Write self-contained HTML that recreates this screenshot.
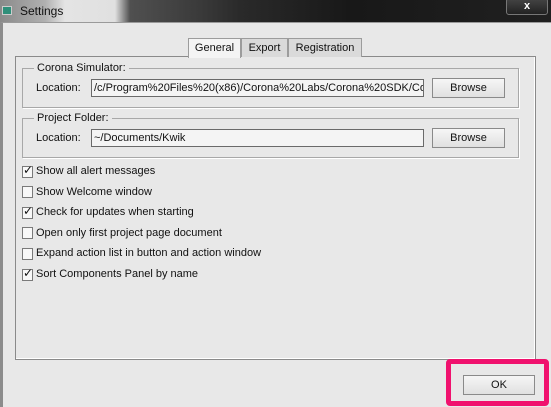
<!DOCTYPE html>
<html><head><style>
*{margin:0;padding:0;box-sizing:border-box}
body{width:551px;height:407px;overflow:hidden;background:#e6e6e6;font-family:"Liberation Sans",sans-serif;font-size:11px;color:#111;position:relative}
.a{position:absolute}
.title{left:0;top:0;width:551px;height:22px;background:linear-gradient(90deg,#8a8a8a 0,#b0b0b0 45px,#e4e4e4 65px,#e0e0e0 115px,#505050 130px,#3a3a3a 200px,#2a2a2a 240px,#181818 350px,#202020 551px)}
.frame{left:0;top:22px;width:551px;height:385px;border-left:3px solid #8c8c8c;border-top:1px solid #9a9a9a;background:#e8e8e8}
.tab{top:38px;height:19px;border:1px solid #9c9c9c;border-bottom:none;background:#dadada;text-align:center;line-height:18px;font-size:11px}
.panel{left:15px;top:56px;width:521px;height:304px;border:1px solid #8a8a8a;box-shadow:inset -1px -1px 0 #fff}
.grp{left:22px;width:497px;height:40px;border:1px solid #a8a8a8;box-shadow:1px 1px 0 #fff}
.gl{background:#e8e8e8;padding:0 3px;font-size:11px}
.fld{left:91px;width:333px;height:18px;border:1px solid #6a6a6a;background:#f4f4f4;line-height:16px;padding-left:2px;font-size:11px;white-space:nowrap;overflow:hidden}
.btn{width:73px;height:20px;border:1px solid #8a8a8a;background:linear-gradient(#f6f6f6,#e0e0e0);text-align:center;line-height:18px;font-size:11px}
.cb{left:22px;width:11px;height:12px;border:1px solid #7a7a7a;background:#f8f8f8}
.cl{left:36px;font-size:11px}
</style></head><body>
<div class="a title"></div>
<div class="a" style="left:2px;top:6px;width:10px;height:9px;background:#2f8f7a;border:1px solid #ccc"></div>
<div class="a" style="left:20px;top:4px;font-size:12px;color:#111">Settings</div>
<div class="a" style="left:506px;top:-2px;width:42px;height:17px;border:1px solid #777;border-radius:3px;background:linear-gradient(#444,#222);color:#fff;text-align:center;font-weight:bold;font-size:11px;line-height:15px">x</div>
<div class="a frame"></div>
<div class="a panel"></div>
<div class="a tab" style="left:188px;width:53px;background:#f4f4f4;height:20px">General</div>
<div class="a tab" style="left:241px;width:47px">Export</div>
<div class="a tab" style="left:288px;width:74px">Registration</div>
<div class="a grp" style="top:68px"></div>
<div class="a gl" style="left:34px;top:62px">Corona Simulator:</div>
<div class="a" style="left:36px;top:82px">Location:</div>
<div class="a fld" style="top:79px">/c/Program%20Files%20(x86)/Corona%20Labs/Corona%20SDK/Corona</div>
<div class="a btn" style="left:432px;top:78px">Browse</div>
<div class="a grp" style="top:118px"></div>
<div class="a gl" style="left:34px;top:112px">Project Folder:</div>
<div class="a" style="left:36px;top:132px">Location:</div>
<div class="a fld" style="top:129px">~/Documents/Kwik</div>
<div class="a btn" style="left:432px;top:128px">Browse</div>

<div class="a cb" style="top:166px"></div><div class="a" style="left:23px;top:163px;font-size:12px">✓</div><div class="a cl" style="top:165px">Show all alert messages</div>
<div class="a cb" style="top:186px"></div><div class="a cl" style="top:186px">Show Welcome window</div>
<div class="a cb" style="top:207px"></div><div class="a" style="left:23px;top:204px;font-size:12px">✓</div><div class="a cl" style="top:206px">Check for updates when starting</div>
<div class="a cb" style="top:227px"></div><div class="a cl" style="top:227px">Open only first project page document</div>
<div class="a cb" style="top:248px"></div><div class="a cl" style="top:247px">Expand action list in button and action window</div>
<div class="a cb" style="top:269px"></div><div class="a" style="left:23px;top:266px;font-size:12px">✓</div><div class="a cl" style="top:268px">Sort Components Panel by name</div>

<div class="a" style="left:446px;top:359px;width:103px;height:47px;border:5px solid #f0116e;border-radius:4px"></div>
<div class="a btn" style="left:463px;top:375px;width:72px;height:20px">OK</div>
</body></html>
